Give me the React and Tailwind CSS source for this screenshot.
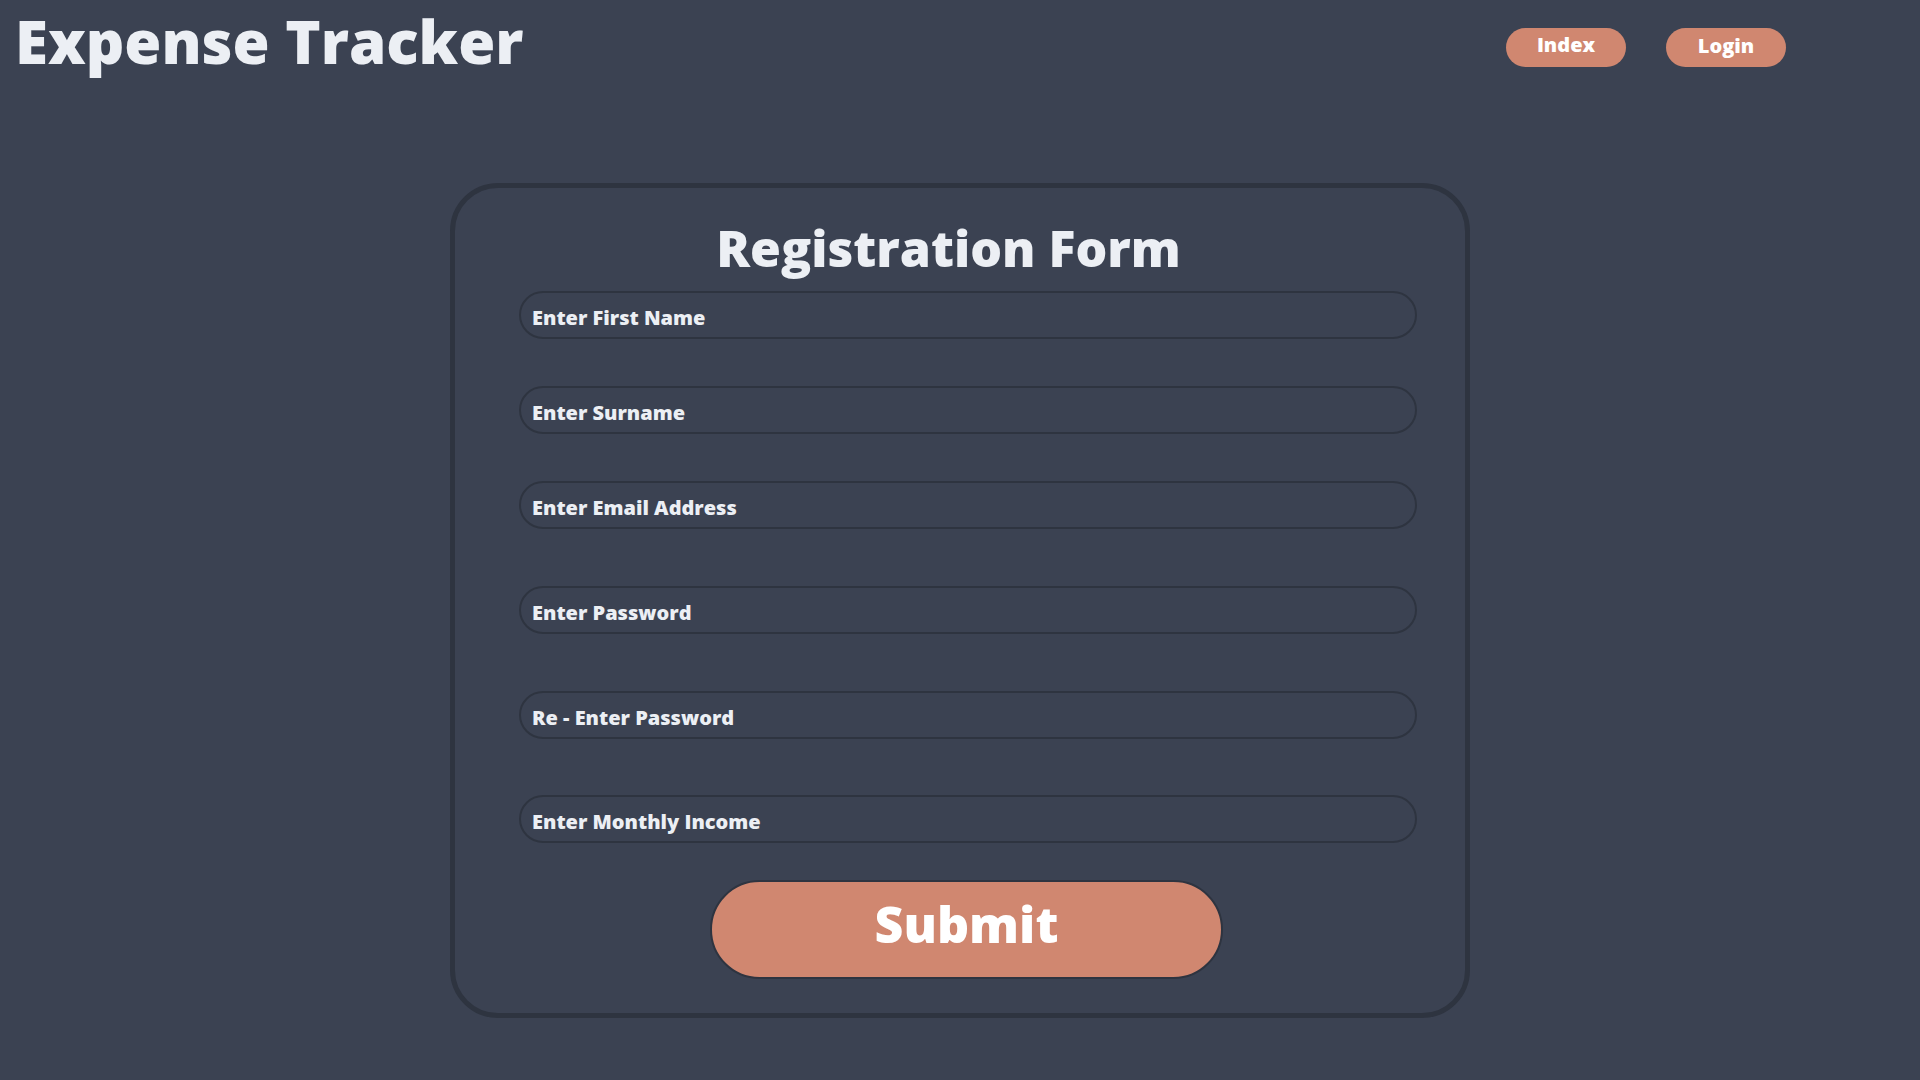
import React from 'react'

const fields = [
    { placeholder: "Enter First Name", type: "text", mt: "mt-[18px]" },
    { placeholder: "Enter Surname", type: "text", mt: "mt-[47px]" },
    { placeholder: "Enter Email Address", type: "email", mt: "mt-[47px]" },
    { placeholder: "Enter Password", type: "password", mt: "mt-[57px]" },
    { placeholder: "Re - Enter Password", type: "password", mt: "mt-[57px]" },
    { placeholder: "Enter Monthly Income", type: "number", mt: "mt-[56px]" },
]

const App = () => {
    return (
        <div className="min-h-screen bg-[#3b4252] font-['Open_Sans',sans-serif] text-[#eceff4]">
            {/* Header */}
            <div className="flex h-[72px] items-start">
                <h1 className="ml-[15px] mt-[1px] text-[60px] font-extrabold leading-[80px]">Expense Tracker</h1>
                <div className="ml-auto mr-[134px] mt-[28px] flex gap-[40px]">
                    <button className="h-[39px] w-[120px] rounded-full bg-[#d08770] pb-[6px] text-[20px] font-extrabold leading-[27px] text-white">
                        Index
                    </button>
                    <button className="h-[39px] w-[120px] rounded-full bg-[#d08770] pb-[4px] text-[20px] font-extrabold leading-[27px] text-white">
                        Login
                    </button>
                </div>
            </div>

            {/* Registration card */}
            <div className="mx-auto mt-[111px] flex w-[1020px] flex-col rounded-[48px] border-[5px] border-[#2e3440] pb-[34px]">
                <h2 className="mt-[35px] pr-[23px] text-center text-[50px] font-extrabold leading-[50px]">Registration Form</h2>

                <form className="flex flex-col" onSubmit={(e) => e.preventDefault()}>
                    {fields.map((field) => (
                        <input
                            key={field.placeholder}
                            type={field.type}
                            placeholder={field.placeholder}
                            className={`${field.mt} ml-[64px] h-[48px] w-[898px] rounded-full border-2 border-[#2e3440] bg-transparent pl-[11px] pt-[4px] text-[20px] font-extrabold text-[#eceff4] outline-none placeholder:text-[#eceff4]`}
                        />
                    ))}

                    <button
                        type="submit"
                        className="ml-[255px] mt-[37px] h-[99px] w-[513px] rounded-full border-2 border-[#2e3440] bg-[#d08770] pb-[12px] text-[50px] font-extrabold leading-[50px] text-white"
                    >
                        Submit
                    </button>
                </form>
            </div>
        </div>
    )
}

export default App
